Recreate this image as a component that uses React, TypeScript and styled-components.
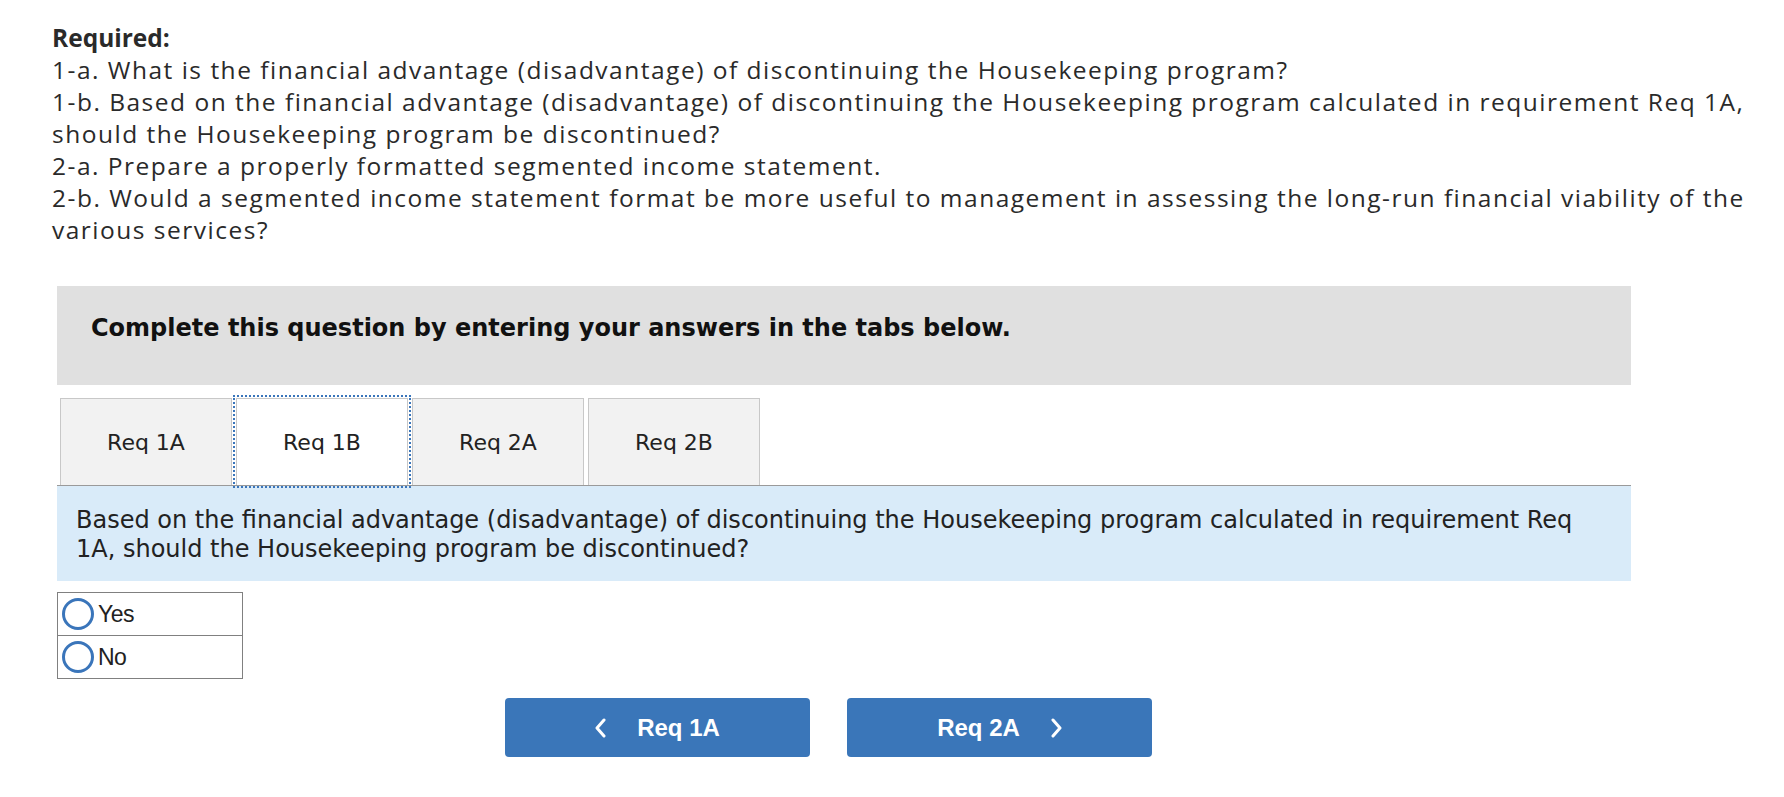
import React, { useState } from 'react'
import styled, { createGlobalStyle } from 'styled-components'

const GlobalStyle = createGlobalStyle`
  body {
    margin: 0;
    background: #ffffff;
  }
`

const tabs = ['Req 1A', 'Req 1B', 'Req 2A', 'Req 2B']

function Chevron({ dir }: { dir: 'left' | 'right' }) {
    const points = dir === 'left' ? '9,2 2,10 9,18' : '3,2 10,10 3,18'
    return (
        <svg width="12" height="20" viewBox="0 0 12 20">
            <polyline points={points} fill="none" stroke="#ffffff" strokeWidth="3" strokeLinejoin="round" strokeLinecap="round" />
        </svg>
    )
}

export default function App() {
    const [active, setActive] = useState(1)
    const [answer, setAnswer] = useState<string | null>(null)

    return (
        <Page>
            <GlobalStyle />
            <Required>
                <strong>Required:</strong><br />
                1-a. What is the financial advantage (disadvantage) of discontinuing the Housekeeping program?<br />
                1-b. Based on the financial advantage (disadvantage) of discontinuing the Housekeeping program calculated in requirement Req 1A,<br />
                should the Housekeeping program be discontinued?<br />
                2-a. Prepare a properly formatted segmented income statement.<br />
                2-b. Would a segmented income statement format be more useful to management in assessing the long-run financial viability of the<br />
                various services?
            </Required>

            <Instructions>Complete this question by entering your answers in the tabs below.</Instructions>

            <TabBar>
                {tabs.map((t, i) => (
                    <Tab key={t} active={i === active} onClick={() => setActive(i)}>{t}</Tab>
                ))}
            </TabBar>

            <QuestionPanel>
                Based on the financial advantage (disadvantage) of discontinuing the Housekeeping program calculated in requirement Req<br />
                1A, should the Housekeeping program be discontinued?
            </QuestionPanel>

            <Choices>
                {['Yes', 'No'].map(opt => (
                    <ChoiceRow key={opt} onClick={() => setAnswer(opt)}>
                        <Radio checked={answer === opt} />
                        <ChoiceLabel>{opt}</ChoiceLabel>
                    </ChoiceRow>
                ))}
            </Choices>

            <NavRow>
                <NavButton>
                    <Chevron dir="left" />
                    <span>Req 1A</span>
                </NavButton>
                <NavButton>
                    <span>Req 2A</span>
                    <Chevron dir="right" />
                </NavButton>
            </NavRow>
        </Page>
    )
}

const Page = styled.div`
    padding: 22px 0 40px 52px;
`

const Required = styled.div`
    font-family: "Open Sans", Lato, sans-serif;
    font-size: 24.5px;
    line-height: 32px;
    letter-spacing: 1.5px;
    color: #2a2a2a;
    white-space: nowrap;

    strong {
        font-weight: 700;
        letter-spacing: 0;
    }
`

const Instructions = styled.div`
    margin: 40px 0 0 5px;
    width: 1574px;
    height: 99px;
    box-sizing: border-box;
    padding: 30px 0 0 34px;
    background: #e0e0e0;
    font-family: "DejaVu Sans", Verdana, sans-serif;
    font-weight: 700;
    font-size: 24px;
    line-height: 24px;
    color: #111111;
`

const TabBar = styled.div`
    display: flex;
    gap: 4px;
    margin: 13px 0 0 5px;
    padding-left: 3px;
    width: 1574px;
    box-sizing: border-box;
    border-bottom: 1px solid #9a9a9a;
`

const Tab = styled.div<{ active: boolean }>`
    width: 172px;
    height: 87px;
    box-sizing: border-box;
    display: flex;
    align-items: center;
    justify-content: center;
    border: 1px solid #c8c8c8;
    border-bottom: none;
    background: ${p => (p.active ? '#ffffff' : '#f2f2f2')};
    outline: ${p => (p.active ? '2px dotted #3a75ba' : 'none')};
    outline-offset: 1px;
    font-family: "DejaVu Sans", Verdana, sans-serif;
    font-size: 22px;
    color: #222222;
    cursor: pointer;
`

const QuestionPanel = styled.div`
    margin-left: 5px;
    width: 1574px;
    box-sizing: border-box;
    padding: 20px 10px 17px 19px;
    background: #d9ebf9;
    font-family: "DejaVu Sans", Verdana, sans-serif;
    font-size: 24px;
    line-height: 29px;
    color: #222222;
    white-space: nowrap;
`

const Choices = styled.div`
    margin: 11px 0 0 5px;
    width: 186px;
    box-sizing: border-box;
    border: 1px solid #808080;
`

const ChoiceRow = styled.div`
    display: flex;
    align-items: center;
    height: 42px;
    padding-left: 4px;
    cursor: pointer;

    & + & {
        border-top: 1px solid #808080;
    }
`

const Radio = styled.span<{ checked: boolean }>`
    width: 32px;
    height: 32px;
    box-sizing: border-box;
    border-radius: 50%;
    border: 3px solid #3a75ba;
    background: ${p => (p.checked ? 'radial-gradient(circle, #3a75ba 0 6px, #fff 7px)' : '#ffffff')};
`

const ChoiceLabel = styled.span`
    margin-left: 4px;
    font-family: "Liberation Sans", Arial, sans-serif;
    font-size: 23px;
    letter-spacing: -0.5px;
    color: #222222;
`

const NavRow = styled.div`
    display: flex;
    gap: 37px;
    margin: 19px 0 0 453px;
`

const NavButton = styled.button`
    width: 305px;
    height: 59px;
    display: flex;
    align-items: center;
    justify-content: center;
    gap: 30px;
    border: none;
    border-radius: 4px;
    background: #3a76b9;
    color: #ffffff;
    font-family: "Liberation Sans", Arial, sans-serif;
    font-weight: 700;
    font-size: 24px;
    cursor: pointer;
`
